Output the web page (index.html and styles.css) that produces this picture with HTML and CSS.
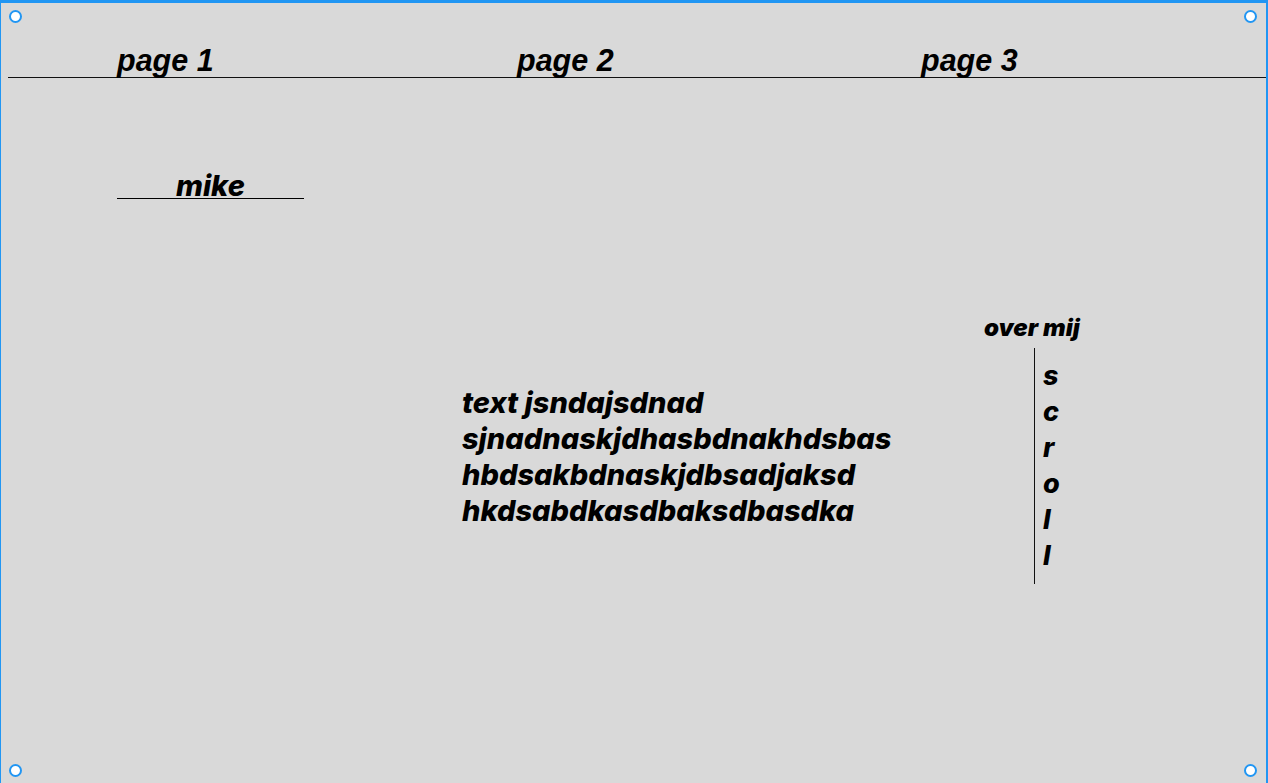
FILE: index.html
```html
<!DOCTYPE html>
<html lang="nl">
<head>
<meta charset="utf-8">
<title>Mike</title>
<link rel="stylesheet" href="styles.css">
</head>
<body>
<div class="frame">
  <nav class="nav">
    <span class="nav-item">page 1</span>
    <span class="nav-item">page 2</span>
    <span class="nav-item">page 3</span>
  </nav>
  <div class="name-wrap">
    <div class="name">mike</div>
  </div>
  <div class="content">
    <p class="text">text jsndajsdnad<br>sjnadnaskjdhasbdnakhdsbas<br>hbdsakbdnaskjdbsadjaksd<br>hkdsabdkasdbaksdbasdka</p>
    <aside class="side">
      <div class="side-title">over mij</div>
      <div class="scroll">
        <span>s</span><span>c</span><span>r</span><span>o</span><span>l</span><span>l</span>
      </div>
    </aside>
  </div>
  <span class="handle tl"></span>
  <span class="handle tr"></span>
  <span class="handle bl"></span>
  <span class="handle br"></span>
</div>
</body>
</html>
```
FILE: styles.css
```css
html, body {
  margin: 0;
  padding: 0;
  background: #d9d9d9;
}
.frame {
  position: relative;
  width: 1268px;
  height: 783px;
  box-sizing: border-box;
  background: #d9d9d9;
  border-top: 3px solid #2196f3;
  border-left: 1px solid #2196f3;
  border-right: 2px solid #2196f3;
  overflow: hidden;
  font-family: Inter, "Liberation Sans", sans-serif;
  font-style: italic;
  font-weight: 800;
  color: #000;
}
.nav {
  display: grid;
  grid-template-columns: 400px 404px auto;
  margin-left: 7px;
  padding-left: 109px;
  height: 75px;
  box-sizing: border-box;
  padding-top: 42px;
  border-bottom: 1px solid #111;
}
.nav-item {
  font-family: "Liberation Sans", Arial, sans-serif;
  font-weight: 700;
  font-size: 30.5px;
  line-height: 30px;
}
.name-wrap {
  padding-left: 116px;
  padding-top: 96px;
}
.name {
  width: 187px;
  box-sizing: border-box;
  padding-left: 59px;
  font-size: 29px;
  line-height: 24px;
  border-bottom: 1px solid #000;
}
.content {
  display: flex;
  align-items: flex-start;
  padding-top: 116px;
  padding-left: 461px;
}
.text {
  margin: 0;
  margin-top: 70px;
  font-size: 29px;
  line-height: 36px;
  width: 521px;
}
.side {
  display: flex;
  flex-direction: column;
}
.side-title {
  font-size: 24px;
  font-weight: 900;
  line-height: 26px;
  margin-left: 1px;
}
.scroll {
  display: flex;
  flex-direction: column;
  margin-left: 51px;
  margin-top: 7px;
  padding-left: 8px;
  padding-top: 10px;
  height: 236px;
  box-sizing: border-box;
  border-left: 1px solid #111;
  font-size: 27px;
  line-height: 36px;
}
.handle {
  position: absolute;
  width: 9px;
  height: 9px;
  border: 2px solid #2196f3;
  border-radius: 50%;
  background: #fff;
}
.handle.tl { left: 8px; top: 7px; }
.handle.tr { right: 9px; top: 7px; }
.handle.bl { left: 8px; bottom: 6px; }
.handle.br { right: 9px; bottom: 6px; }
```
